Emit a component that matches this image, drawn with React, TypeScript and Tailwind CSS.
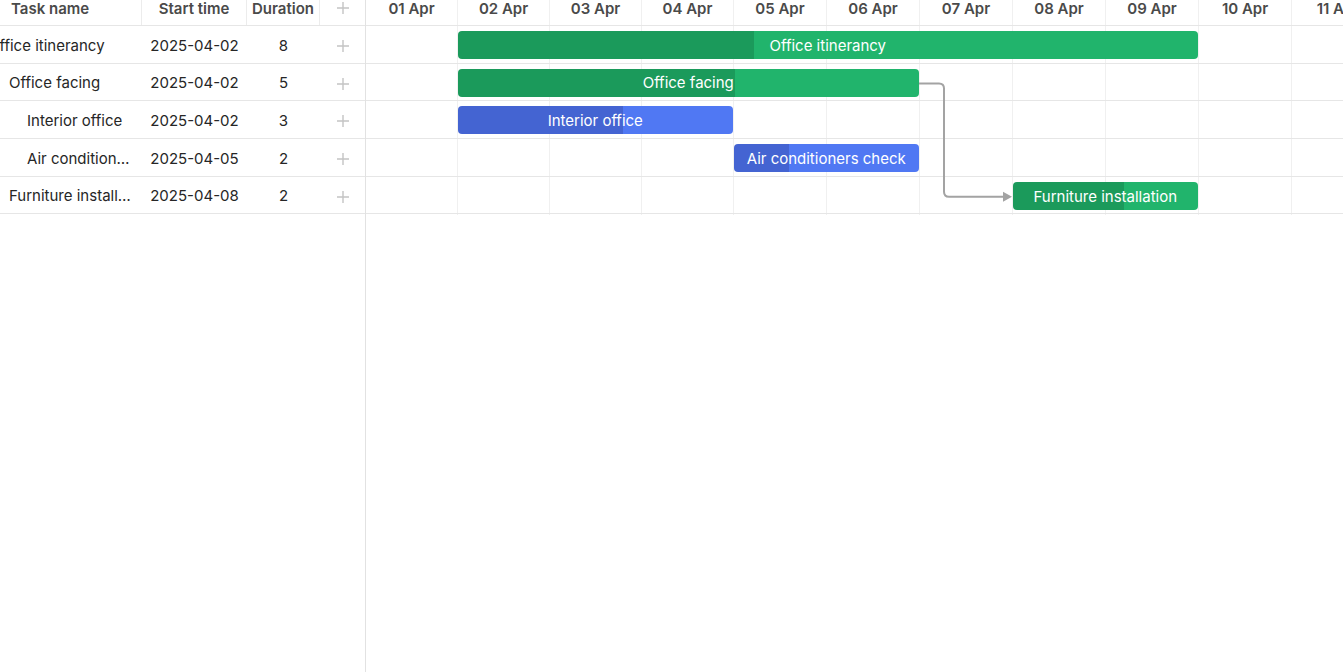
import React from "react";

type Task = {
  name: string;
  start: string;
  duration: number;
  level: number;
  day: number; // index of the first day column
  progress: number; // 0..1
  color: "green" | "blue";
};

const tasks: Task[] = [
  { name: "Office itinerancy", start: "2025-04-02", duration: 8, level: 0, day: 1, progress: 0.4, color: "green" },
  { name: "Office facing", start: "2025-04-02", duration: 5, level: 1, day: 1, progress: 0.6, color: "green" },
  { name: "Interior office", start: "2025-04-02", duration: 3, level: 2, day: 1, progress: 0.6, color: "blue" },
  { name: "Air conditioners check", start: "2025-04-05", duration: 2, level: 2, day: 4, progress: 0.3, color: "blue" },
  { name: "Furniture installation", start: "2025-04-08", duration: 2, level: 1, day: 7, progress: 0.6, color: "green" },
];

const days = ["01 Apr", "02 Apr", "03 Apr", "04 Apr", "05 Apr", "06 Apr", "07 Apr", "08 Apr", "09 Apr", "10 Apr", "11 Apr"];
const dayWidths = [92, 92, 92, 92, 93, 93, 93, 93, 93, 93, 93];
const dayX: number[] = dayWidths.reduce<number[]>((acc, w) => [...acc, acc[acc.length - 1] + w], [0]);

const ROW_H = 37.7;

const palette = {
  green: { done: "#1b9a5b", rest: "#21b46c" },
  blue: { done: "#4464d2", rest: "#5078f3" },
};

const indent = [-12, 9, 27];

function Plus() {
  return (
    <svg width="14" height="14" viewBox="0 0 14 14" className="text-[#c4c4c4]">
      <path d="M7 1v12M1 7h12" stroke="currentColor" strokeWidth="1.4" />
    </svg>
  );
}

function TaskGrid() {
  return (
    <div className="w-[366px] shrink-0 border-r border-[#e2e2e2] h-full flex flex-col">
      <div className="h-[26px] shrink-0 border-b border-[#e6e6e6] flex text-[15px] font-semibold text-[#4a4a4a] leading-[17px]">
        <div className="w-[142px] border-r border-[#ececec] pl-[11px]">Task name</div>
        <div className="w-[105px] border-r border-[#ececec] text-center">Start time</div>
        <div className="w-[73px] border-r border-[#ececec] text-center">Duration</div>
        <div className="flex-1 flex justify-center pt-[1px]">
          <Plus />
        </div>
      </div>
      {tasks.map((t) => (
        <div
          key={t.name}
          className="h-[37.7px] shrink-0 border-b border-[#e6e6e6] flex items-center pt-[3px] text-[15px] text-[#262626]"
        >
          <div className="w-[142px] overflow-hidden pr-[11px]">
            <div
              className="whitespace-nowrap overflow-hidden text-ellipsis"
              style={{ marginLeft: indent[t.level] }}
            >
              {t.name}
            </div>
          </div>
          <div className="w-[105px] text-center">{t.start}</div>
          <div className="w-[73px] text-center">{t.duration}</div>
          <div className="flex-1 flex justify-center">
            <Plus />
          </div>
        </div>
      ))}
    </div>
  );
}

function Timeline() {
  const bodyH = ROW_H * tasks.length;
  const y2 = ROW_H * 1.5 + 1;
  const y5 = ROW_H * 4.5 + 1;
  const elbow = 578;
  return (
    <div className="flex-1 overflow-hidden h-full">
      <div className="flex h-[26px] border-b border-[#e6e6e6] text-[15px] font-semibold text-[#4a4a4a] leading-[17px]">
        {days.map((d, i) => (
          <div
            key={d}
            className="shrink-0 border-r border-[#f0f0f0] text-center whitespace-nowrap"
            style={{ width: dayWidths[i] }}
          >
            {d}
          </div>
        ))}
      </div>
      <div className="relative" style={{ height: bodyH }}>
        {/* day columns */}
        <div className="absolute inset-0 flex">
          {days.map((d, i) => (
            <div
              key={d}
              className="shrink-0 border-r border-[#f0f0f0] h-full"
              style={{ width: dayWidths[i] }}
            />
          ))}
        </div>
        {/* row lines */}
        <div className="absolute inset-0 flex flex-col">
          {tasks.map((t) => (
            <div key={t.name} className="h-[37.7px] shrink-0 border-b border-[#e6e6e6]" />
          ))}
        </div>
        {/* bars */}
        {tasks.map((t, i) => {
          const c = palette[t.color];
          const left = dayX[t.day];
          const width = dayX[t.day + t.duration] - left;
          return (
            <div
              key={t.name}
              className="absolute h-[28px] rounded-[4px] overflow-hidden flex items-center justify-center pt-[2px] text-white text-[15px] whitespace-nowrap"
              style={{
                left: left - 0.5,
                top: i * ROW_H + 5,
                width: width - 0.5,
                background: `linear-gradient(to right, ${c.done} ${t.progress * 100}%, ${c.rest} ${t.progress * 100}%)`,
              }}
            >
              {t.name}
            </div>
          );
        })}
        {/* dependency link: Office facing -> Furniture installation */}
        <svg className="absolute inset-0 pointer-events-none" width="978" height={bodyH}>
          <path
            d={`M ${dayX[6] - 1} ${y2} H ${elbow - 5} Q ${elbow} ${y2} ${elbow} ${y2 + 5} V ${y5 - 5} Q ${elbow} ${y5} ${elbow + 5} ${y5} H ${dayX[7] - 9}`}
            fill="none"
            stroke="#a3a3a3"
            strokeWidth="2"
          />
          <path
            d={`M ${dayX[7] - 10} ${y5 - 5} L ${dayX[7] - 1} ${y5} L ${dayX[7] - 10} ${y5 + 5} Z`}
            fill="#a3a3a3"
          />
        </svg>
      </div>
    </div>
  );
}

export default function App() {
  return (
    <div
      className="w-[1343px] h-[672px] bg-white flex overflow-hidden"
      style={{ fontFamily: "Inter, 'Noto Sans', sans-serif" }}
    >
      <TaskGrid />
      <Timeline />
    </div>
  );
}
